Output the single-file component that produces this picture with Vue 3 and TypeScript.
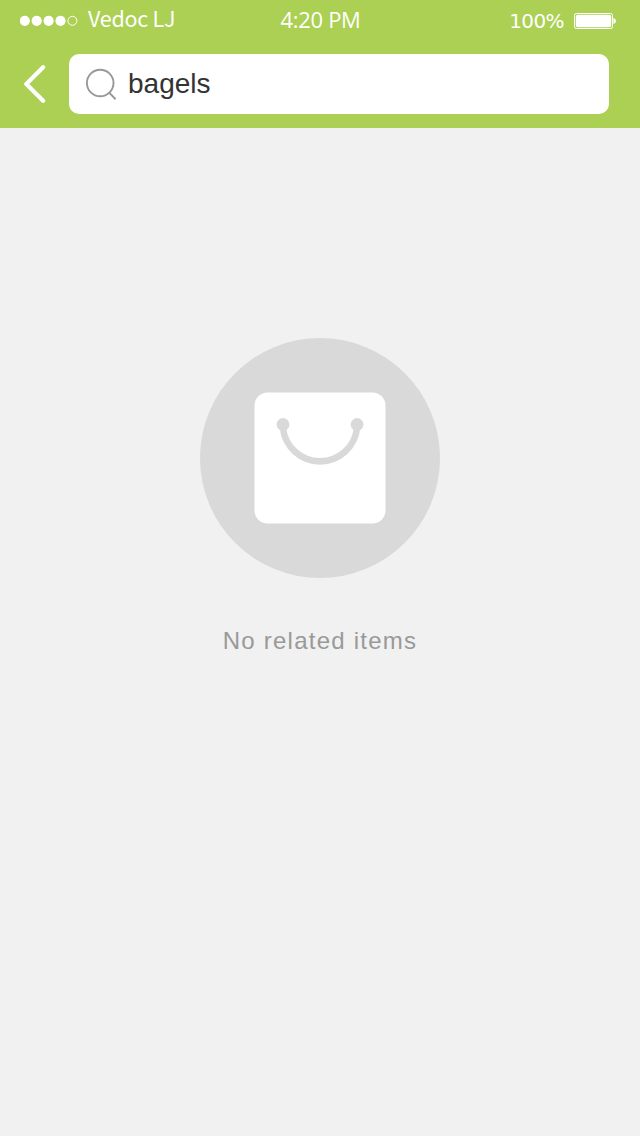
<script setup lang="ts">
import { ref } from 'vue'

const query = ref('bagels')
const carrier = 'Vedoc LJ'
const time = '4:20 PM'
const battery = '100%'
const signal = [0, 1, 2, 3]
</script>

<template>
  <div class="screen">
    <header class="header">
      <div class="status">
        <div class="status-left">
          <svg class="signal" width="60" height="12" viewBox="0 0 60 12">
            <circle v-for="i in signal" :key="i" :cx="4.8 + i * 11.9" cy="5.8" r="5.1" fill="#fff" />
            <circle cx="52.4" cy="5.8" r="4.5" fill="none" stroke="#fff" stroke-width="1" />
          </svg>
          <span class="carrier">{{ carrier }}</span>
        </div>
        <span class="time">{{ time }}</span>
        <div class="status-right">
          <span class="percent">{{ battery }}</span>
          <svg class="battery" width="42" height="16" viewBox="0 0 42 16">
            <rect x="0.5" y="0.5" width="38" height="15" rx="1.8" fill="none" stroke="#fff" />
            <rect x="1.8" y="1.7" width="35.4" height="12.6" rx="1.8" fill="#fff" />
            <path d="M39.4 5C41.1 5.6 41.9 6.5 41.9 8S41.1 10.4 39.4 11Z" fill="#fff" />
          </svg>
        </div>
      </div>
      <div class="nav">
        <svg class="back" width="24" height="40" viewBox="0 0 24 40">
          <path d="M20.1 2.2L3.3 19L20.1 35.8" fill="none" stroke="#fff" stroke-width="4.2" stroke-linecap="round" stroke-linejoin="round" />
        </svg>
        <div class="search">
          <svg class="glass" width="32" height="32" viewBox="0 0 32 32">
            <circle cx="15.2" cy="15" r="13.3" fill="none" stroke="#999" stroke-width="1.9" />
            <path d="M24.2 24.6L30.6 31.2" fill="none" stroke="#999" stroke-width="2" />
          </svg>
          <span class="query">{{ query }}</span>
        </div>
      </div>
    </header>
    <main class="empty">
      <svg width="240" height="240" viewBox="0 0 240 240">
        <circle cx="120" cy="120" r="120" fill="#d9d9d9" />
        <rect x="54.5" y="54.5" width="131" height="131" rx="13" fill="#fff" />
        <path d="M83 90A37.2 37.2 0 0 0 157 90" fill="none" stroke="#d9d9d9" stroke-width="6.6" />
        <circle cx="83" cy="86.5" r="6.4" fill="#d9d9d9" />
        <circle cx="157.1" cy="86.5" r="6.4" fill="#d9d9d9" />
      </svg>
      <p class="message">No related items</p>
    </main>
  </div>
</template>

<style>
body {
  margin: 0;
  background: #f1f1f1;
}
</style>

<style scoped>
.screen {
  width: 640px;
  height: 1136px;
  overflow: hidden;
  background: #f1f1f1;
  font-family: "Liberation Sans", Arial, sans-serif;
}
.header {
  height: 128px;
  background: #abd053;
}
.status {
  display: grid;
  grid-template-columns: 1fr auto 1fr;
  align-items: center;
  height: 41px;
  padding: 0 24px 0 20px;
  color: #fff;
  line-height: 40px;
  white-space: nowrap;
}
.status-left,
.status-right {
  display: flex;
  align-items: center;
}
.status-right {
  justify-content: flex-end;
}
.signal {
  margin-right: 8px;
}
.carrier {
  margin-bottom: 5px;
  font-family: "Noto Sans CJK SC", sans-serif;
  font-size: 21.5px;
  line-height: 36px;
  letter-spacing: -0.25px;
}
.time {
  margin: 0 0 4px 5px;
  font-family: "Open Sans", sans-serif;
  font-size: 22px;
  line-height: 36px;
  letter-spacing: -0.3px;
}
.percent {
  margin-right: 10px;
  font-family: "DejaVu Sans", sans-serif;
  font-size: 20px;
  letter-spacing: -0.6px;
}
.nav {
  display: flex;
  padding-top: 13px;
}
.back {
  margin: 11px 22px 0 23px;
}
.search {
  display: flex;
  align-items: center;
  box-sizing: border-box;
  width: 540px;
  height: 60px;
  padding-left: 16px;
  border-radius: 10px;
  background: #fff;
}
.query {
  margin-left: 11px;
  color: #333;
  font-size: 28px;
  line-height: 60px;
}
.empty {
  display: flex;
  flex-direction: column;
  align-items: center;
  padding-top: 210px;
}
.message {
  margin: 49px 0 0;
  color: #999;
  font-size: 24px;
  line-height: 28px;
  letter-spacing: 1.25px;
}
</style>
